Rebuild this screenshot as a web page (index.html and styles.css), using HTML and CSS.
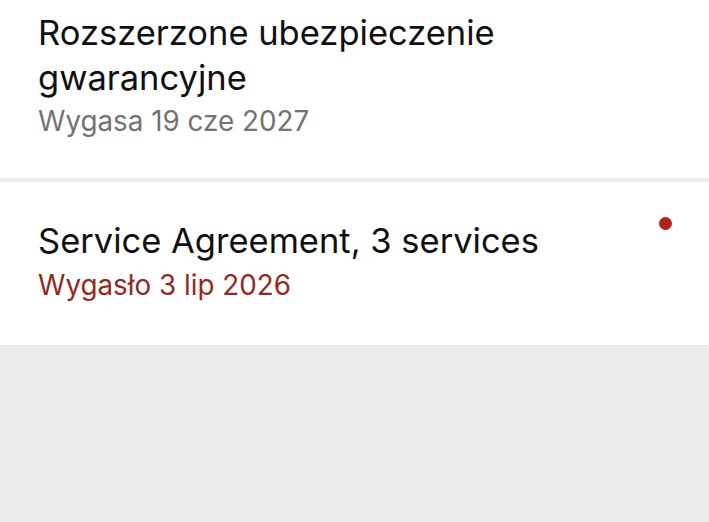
FILE: index.html
```html
<!DOCTYPE html>
<html lang="pl">
<head>
<meta charset="utf-8">
<title>Umowy</title>
<link rel="stylesheet" href="styles.css">
</head>
<body>
<main class="list">
  <section class="item item--first">
    <div class="item__text">
      <div class="item__title">Rozszerzone ubezpieczenie gwarancyjne</div>
      <div class="item__sub">Wygasa 19 cze 2027</div>
    </div>
  </section>
  <section class="item">
    <div class="item__text">
      <div class="item__title">Service Agreement, 3 services</div>
      <div class="item__sub item__sub--expired">Wygasło 3 lip 2026</div>
    </div>
    <span class="item__dot" aria-label="wygasło"></span>
  </section>
</main>
</body>
</html>
```
FILE: styles.css
```css
html, body {
  margin: 0;
  padding: 0;
}
body {
  background: #ebebeb;
  font-family: Inter, "Noto Sans", "Liberation Sans", sans-serif;
  width: 709px;
  height: 522px;
  overflow: hidden;
}
.list {
  display: flex;
  flex-direction: column;
  gap: 4px;
}
.item {
  background: #ffffff;
  display: flex;
  align-items: flex-start;
  gap: 20px;
  padding: 36.5px 37px 42px 38px;
}
.item--first {
  padding-top: 9.5px;
  padding-bottom: 39px;
}
.item__text {
  flex: 1;
  display: flex;
  flex-direction: column;
  gap: 3.4px;
  max-width: 560px;
}
.item__title {
  font-size: 34.5px;
  line-height: 45px;
  color: #101010;
}
.item__sub {
  font-size: 27.8px;
  line-height: 36px;
  color: #737373;
}
.item__sub--expired {
  color: #922a23;
}
.item__dot {
  width: 13px;
  height: 13px;
  border-radius: 50%;
  background: #ad241b;
  margin-top: -1px;
  margin-left: auto;
  flex: none;
}
```
